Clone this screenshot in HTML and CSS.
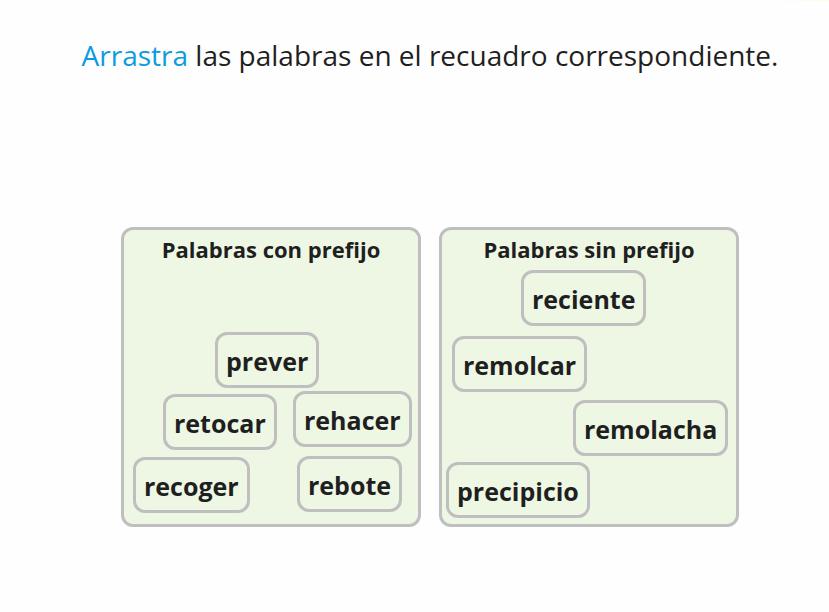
FILE: index.html
```html
<!DOCTYPE html>
<html lang="es">
<head>
<meta charset="utf-8">
<meta name="viewport" content="width=device-width, initial-scale=1">
<title>Palabras con prefijo</title>
<link rel="stylesheet" href="styles.css">
</head>
<body>
<main class="activity">
  <h1 class="prompt"><span class="action">Arrastra</span> las palabras en el recuadro correspondiente.</h1>
  <div class="boxes">
    <section class="box">
      <h2 class="box-title">Palabras con prefijo</h2>
      <button type="button" class="word prever">prever</button>
      <button type="button" class="word retocar">retocar</button>
      <button type="button" class="word rehacer">rehacer</button>
      <button type="button" class="word recoger">recoger</button>
      <button type="button" class="word rebote">rebote</button>
    </section>
    <section class="box">
      <h2 class="box-title">Palabras sin prefijo</h2>
      <button type="button" class="word reciente">reciente</button>
      <button type="button" class="word remolcar">remolcar</button>
      <button type="button" class="word remolacha">remolacha</button>
      <button type="button" class="word precipicio">precipicio</button>
    </section>
  </div>
</main>
</body>
</html>
```
FILE: styles.css
```css
* {
  box-sizing: border-box;
}

body {
  margin: 0;
  background: #fefefe linear-gradient(90deg, #fefefe, #fffbe6) no-repeat top right / 80px 1px;
  color: #1f1f1f;
  font-family: "Segoe UI", "Open Sans", "Noto Sans", sans-serif;
}

.activity {
  padding: 35px 0 40px 31px;
}

.prompt {
  margin: 0;
  font-size: 28px;
  font-weight: 400;
  line-height: 40px;
  text-align: center;
}

.action {
  color: #0a9be0;
}

.boxes {
  display: flex;
  flex-wrap: wrap;
  justify-content: center;
  gap: 18px;
  margin-top: 152px;
}

.box {
  position: relative;
  width: 300px;
  height: 300px;
  border: 3px solid #bfbfbf;
  border-radius: 12px;
  background: #eef7e4;
}

.box-title {
  margin: 3px 0 0;
  font-size: 22px;
  font-weight: 700;
  line-height: 32px;
  text-align: center;
}

.word {
  position: absolute;
  height: 56px;
  padding: 1px 8px 0;
  border: 3px solid #bfbfbf;
  border-radius: 12px;
  background: transparent;
  color: inherit;
  font: inherit;
  font-size: 25px;
  font-weight: 700;
  cursor: grab;
}

.prever { left: 91px; top: 102px; }
.retocar { left: 39px; top: 164px; }
.rehacer { left: 169px; top: 161px; }
.recoger { left: 9px; top: 227px; }
.rebote { left: 173px; top: 226px; }
.reciente { left: 79px; top: 40px; }
.remolcar { left: 10px; top: 106px; }
.remolacha { left: 131px; top: 170px; }
.precipicio { left: 4px; top: 232px; }
```
